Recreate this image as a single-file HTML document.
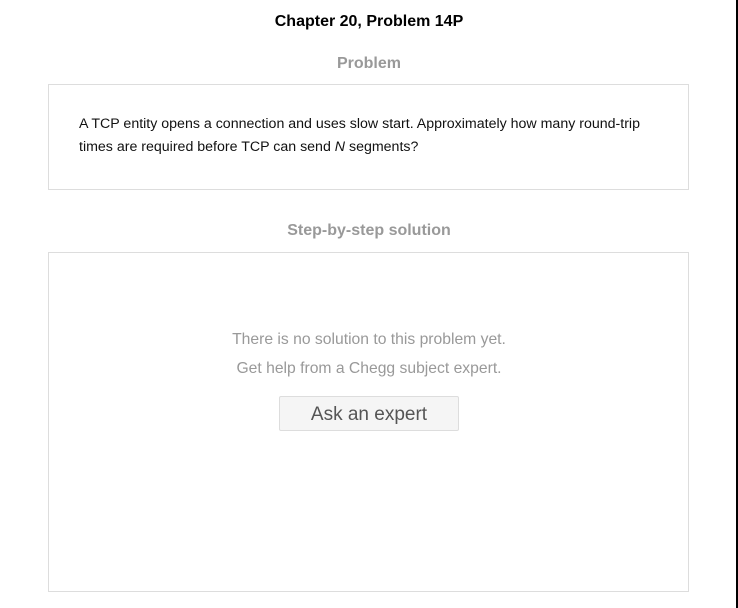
<!DOCTYPE html>
<html><head><style>
body{margin:0;width:738px;height:608px;background:#fff;position:relative;font-family:"Liberation Sans",Arial,sans-serif;overflow:hidden}
.a{position:absolute}
.t{left:0;width:738px;text-align:center}
.box{border:1px solid #ddd;left:48px;width:639px;background:#fff}
</style></head><body>
<div class="a t" style="top:13px;font-size:16px;font-weight:bold;color:#000">Chapter 20, Problem 14P</div>
<div class="a t" style="top:55px;font-size:16px;font-weight:bold;color:#999">Problem</div>
<div class="a box" style="top:84px;height:104px"></div>
<div class="a" style="left:79px;top:113px;width:575px;font-size:14.2px;line-height:23px;color:#111">A TCP entity opens a connection and uses slow start. Approximately how many round-trip times are required before TCP can send <i>N</i> segments?</div>
<div class="a t" style="top:222px;font-size:16px;font-weight:bold;color:#999">Step-by-step solution</div>
<div class="a box" style="top:252px;height:338px"></div>
<div class="a t" style="top:331px;font-size:15.7px;color:#999">There is no solution to this problem yet.</div>
<div class="a t" style="top:360px;font-size:15.7px;color:#999">Get help from a Chegg subject expert.</div>
<div class="a" style="left:279px;top:396px;width:178px;height:33px;border:1px solid #ddd;border-radius:2px;background:#f5f5f5;text-align:center;line-height:35px;font-size:19px;color:#555">Ask an expert</div>
<div class="a" style="left:736px;top:0;width:2px;height:608px;background:#000"></div>
</body></html>
